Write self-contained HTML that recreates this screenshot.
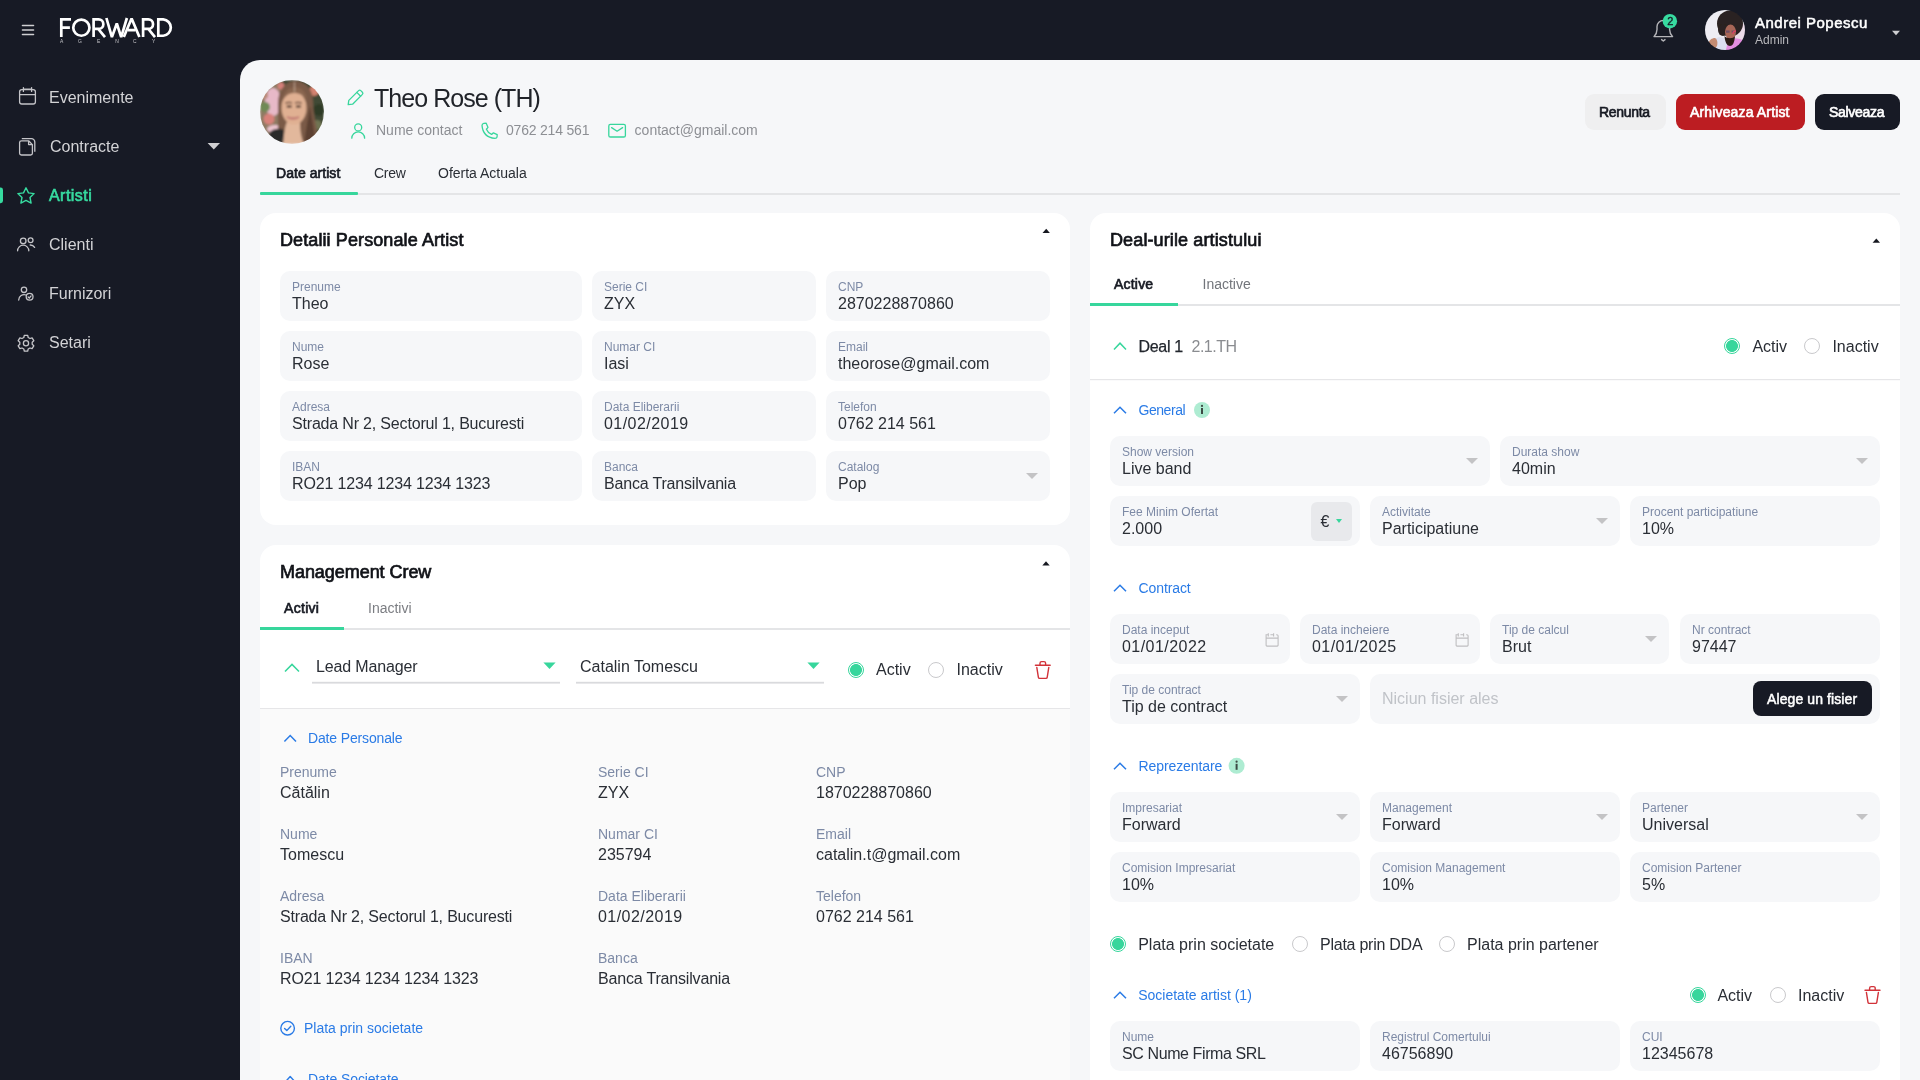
<!DOCTYPE html>
<html><head><meta charset="utf-8">
<style>
*{margin:0;padding:0;box-sizing:border-box}
html,body{-webkit-font-smoothing:antialiased;width:1920px;height:1080px;overflow:hidden;background:#171a25;font-family:"Liberation Sans",sans-serif;color:#2a2e35}
.t{position:absolute;line-height:1;white-space:nowrap}
.b{font-weight:700;letter-spacing:-0.5px}
.side{color:#d3d3d6;font-size:16px}
.ic{position:absolute;overflow:visible}
.main{position:absolute;left:240px;top:60px;width:1680px;height:1020px;background:#f6f7f9;border-top-left-radius:20px;overflow:hidden}
.card{position:absolute;background:#fff;border-radius:16px}
.fld{position:absolute;height:50px;background:#f6f7f9;border-radius:10px}
.fld .l{position:absolute;left:12px;top:10px;font-size:12px;line-height:1;color:#7d8aa6;white-space:nowrap}
.fld .v{position:absolute;left:12px;top:24.5px;font-size:16px;line-height:1;color:#2a2e35;white-space:nowrap}
.fld .cr{position:absolute;right:12px;top:22px;width:0;height:0;border-left:6px solid transparent;border-right:6px solid transparent;border-top:6px solid #c3c3c5}
.lbl{color:#7d8aa6;font-size:14px}
.val{color:#2a2e35;font-size:16px}
.blue{color:#2a7be6}
.rad{position:absolute;width:16px;height:16px;border-radius:50%}
.rad.on{border:1.3px solid #37d69c;background:radial-gradient(circle,#37d69c 0 5.6px,#fff 6.3px)}
.rad.off{border:1.2px solid #c9c9cc;background:#fff}
</style></head><body><div style="position:absolute;left:0;top:0;width:1920px;height:1080px;will-change:transform">

<!-- MAIN BG -->
<div class="main"></div>
<!-- header avatar -->
<svg class="ic" style="left:260px;top:80px" width="64" height="64" viewBox="0 0 64 64">
  <defs>
    <clipPath id="cb"><circle cx="32" cy="32" r="32"/></clipPath>
    <filter id="bl" x="-10%" y="-10%" width="120%" height="120%"><feGaussianBlur stdDeviation="0.9"/></filter>
  </defs>
  <g clip-path="url(#cb)"><g filter="url(#bl)">
    <rect width="64" height="64" fill="#414a34"/>
    <rect x="0" y="0" width="22" height="64" fill="#8f7a64"/>
    <ellipse cx="13" cy="22" rx="8" ry="14" fill="#e7b9c8"/>
    <circle cx="5" cy="27" r="5" fill="#6f8a55"/>
    <circle cx="9" cy="39" r="5.5" fill="#d9817a"/>
    <circle cx="4" cy="15" r="4" fill="#b98a78"/>
    <circle cx="21" cy="6" r="3.5" fill="#d6807a"/>
    <ellipse cx="15" cy="49" rx="8" ry="4" fill="#ecc4cf"/>
    <circle cx="54" cy="11" r="5" fill="#d4826f"/>
    <circle cx="59" cy="30" r="6" fill="#2f3a26"/>
    <circle cx="57" cy="45" r="5" fill="#6f7452"/>
    <path d="M18 64V24C18 9 26 1 35 1C46 1 53 9 53 22C53 40 60 52 56 64Z" fill="#7a5a46"/>
    <path d="M6 64L10 52C14 48 20 48 24 50L26 64Z" fill="#2b2a2c"/>
    <path d="M23 64C24 54 25 46 27 42H40C40 50 41 58 44 64Z" fill="#e2b89c"/>
    <ellipse cx="34" cy="28" rx="12.5" ry="16.5" fill="#e0b092"/>
    <path d="M44 64C46 50 48 38 50 26L56 64Z" fill="#5c4030"/>
    <path d="M22 22C24 10 30 7 35 7C41 7 46 12 47 20C43 14 38 13 34 13C28 13 24 17 22 22Z" fill="#8a6650"/>
    <path d="M27 37Q33 41 39 37Q33 39 27 37Z" fill="#c27a74" stroke="#c27a74" stroke-width="1.6"/>
    <path d="M26.8 26.6H31.6M36 26.6H40.8" stroke="#3a2820" stroke-width="2"/>
    <path d="M25.5 23.2Q29 21.6 32 23M35 23Q38 21.6 41.5 23.2" stroke="#4a3026" stroke-width="1.3" fill="none"/><path d="M34.5 2V12" stroke="#c9b09a" stroke-width="0.8"/>
  </g></g>
</svg>
<svg class="ic" style="left:340px;top:84px" width="300" height="60" viewBox="340 84 300 60">
  <g fill="none" stroke="#37d69c" stroke-width="1.3" stroke-linejoin="round" stroke-linecap="round">
    <path d="M348.2 104.6L348.8 100.4L358.6 90.6A1.6 1.6 0 0 1 360.8 90.6L362.4 92.2A1.6 1.6 0 0 1 362.4 94.4L352.6 104.2Z"/>
    <path d="M356.8 92.4L360.6 96.2"/>
    <circle cx="358.2" cy="127.4" r="3.5"/>
    <path d="M351.8 138.2A6.4 6.4 0 0 1 364.6 138.2"/>
    <path d="M483.8 123.4L486.2 123.2L488 127.4L486.4 129.2C487.4 131.6 489.2 133.4 491.6 134.4L493.4 132.8L497.2 134.6L497 137.2C496.8 138 496 138.4 495 138.4C487.4 137.8 482.6 133 482 125.4C482 124.4 482.8 123.6 483.8 123.4Z"/>
    <rect x="608.8" y="124.4" width="16.6" height="12.6" rx="1.6"/>
    <path d="M611.6 127.6L617.1 131.2L622.6 127.6"/>
  </g>
</svg>
<div class="t" style="left:374px;top:85.5px;font-size:25px;color:#202329;letter-spacing:-0.95px">Theo Rose (TH)</div>
<div class="t" style="left:376px;top:123.4px;font-size:14px;color:#8d8f94">Nume contact</div>
<div class="t" style="left:506px;top:123.4px;font-size:14px;color:#8d8f94;letter-spacing:-0.2px">0762 214 561</div>
<div class="t" style="left:634.6px;top:123.4px;font-size:14px;color:#8d8f94">contact@gmail.com</div>

<!-- buttons -->
<div style="position:absolute;left:1585px;top:94px;width:80.6px;height:35.5px;border-radius:9px;background:#efeff0"></div>
<div class="t" style="left:1599px;top:105px;font-size:14px;color:#161922;letter-spacing:-0.3px;-webkit-text-stroke-width:0.65px">Renunta</div>
<div style="position:absolute;left:1676px;top:94px;width:129px;height:35.5px;border-radius:9px;background:#bc1d22"></div>
<div class="t" style="left:1690px;top:105px;font-size:14px;color:#fff;letter-spacing:0.15px;-webkit-text-stroke-width:0.65px">Arhiveaza Artist</div>
<div style="position:absolute;left:1815px;top:94px;width:85px;height:35.5px;border-radius:9px;background:#171a25"></div>
<div class="t" style="left:1829px;top:105px;font-size:14px;color:#fff;letter-spacing:-0.3px;-webkit-text-stroke-width:0.65px">Salveaza</div>

<!-- tabs -->
<div style="position:absolute;left:260px;top:193px;width:1640px;height:1.5px;background:#e4e5e7"></div>
<div style="position:absolute;left:260px;top:192px;width:98px;height:3px;background:#37d69c;border-radius:1px"></div>
<div class="t" style="left:276px;top:165.6px;font-size:14px;color:#161922;letter-spacing:0.05px;-webkit-text-stroke-width:0.65px">Date artist</div>
<div class="t" style="left:374px;top:165.6px;font-size:14px;color:#2a2e35;letter-spacing:-0.3px">Crew</div>
<div class="t" style="left:438px;top:165.6px;font-size:14px;color:#2a2e35">Oferta Actuala</div>
<!-- CARD 1 -->
<div class="card" style="left:260px;top:213px;width:810px;height:312px"></div>
<div class="t" style="left:280px;top:230.6px;font-size:18px;color:#111318;letter-spacing:0.1px;-webkit-text-stroke:0.7px #111318">Detalii Personale Artist</div>
<svg class="ic" style="left:1040px;top:226px" width="12" height="10"><path d="M2.5 7.1H9.9L6.2 2.8Z" fill="#161820"/></svg>

<div class="fld" style="left:280px;top:271px;width:302px"><div class="l">Prenume</div><div class="v">Theo</div></div>
<div class="fld" style="left:592px;top:271px;width:224px"><div class="l">Serie CI</div><div class="v">ZYX</div></div>
<div class="fld" style="left:826px;top:271px;width:224px"><div class="l">CNP</div><div class="v">2870228870860</div></div>
<div class="fld" style="left:280px;top:331px;width:302px"><div class="l">Nume</div><div class="v">Rose</div></div>
<div class="fld" style="left:592px;top:331px;width:224px"><div class="l">Numar CI</div><div class="v">Iasi</div></div>
<div class="fld" style="left:826px;top:331px;width:224px"><div class="l">Email</div><div class="v">theorose@gmail.com</div></div>
<div class="fld" style="left:280px;top:391px;width:302px"><div class="l">Adresa</div><div class="v" style="letter-spacing:-0.18px">Strada Nr 2, Sectorul 1, Bucuresti</div></div>
<div class="fld" style="left:592px;top:391px;width:224px"><div class="l">Data Eliberarii</div><div class="v" style="letter-spacing:0.45px">01/02/2019</div></div>
<div class="fld" style="left:826px;top:391px;width:224px"><div class="l">Telefon</div><div class="v">0762 214 561</div></div>
<div class="fld" style="left:280px;top:451px;width:302px"><div class="l">IBAN</div><div class="v" style="letter-spacing:-0.15px">RO21 1234 1234 1234 1323</div></div>
<div class="fld" style="left:592px;top:451px;width:224px"><div class="l">Banca</div><div class="v" style="letter-spacing:-0.18px">Banca Transilvania</div></div>
<div class="fld" style="left:826px;top:451px;width:224px"><div class="l">Catalog</div><div class="v">Pop</div><div class="cr"></div></div>

<!-- CARD 2 -->
<div class="card" style="left:260px;top:545px;width:810px;height:600px;overflow:hidden">
  <div style="position:absolute;left:0;top:163px;width:810px;height:1px;background:#e6e6e8"></div>
  <div style="position:absolute;left:0;top:164px;width:810px;height:500px;background:#fafafa"></div>
</div>
<div class="t" style="left:280px;top:562.8px;font-size:18px;color:#111318;letter-spacing:-0.05px;-webkit-text-stroke:0.7px #111318">Management Crew</div>
<svg class="ic" style="left:1040px;top:558px" width="12" height="10"><path d="M2.3 7.6H9.7L6 3.3Z" fill="#161820"/></svg>
<div style="position:absolute;left:260px;top:628px;width:810px;height:1.6px;background:#e4e5e7"></div>
<div style="position:absolute;left:260px;top:627.2px;width:84px;height:3px;background:#37d69c"></div>
<div class="t" style="left:284px;top:600.7px;font-size:14px;color:#161922;letter-spacing:0.3px;-webkit-text-stroke-width:0.65px">Activi</div>
<div class="t" style="left:368px;top:600.7px;font-size:14px;color:#7b7d82">Inactivi</div>

<svg class="ic" style="left:270px;top:650px" width="800" height="110" viewBox="270 650 800 110">
  <path d="M285 671.6L292 664.4L299 671.6" fill="none" stroke="#37d69c" stroke-width="1.5"/>
  <rect x="312" y="681.8" width="248" height="1.8" fill="#d9dadd"/>
  <rect x="576" y="681.8" width="248" height="1.8" fill="#d9dadd"/>
  <path d="M543.4 662.6H555.6L549.5 669Z" fill="#37d69c"/>
  <path d="M807.4 662.6H819.6L813.5 669Z" fill="#37d69c"/>
  <g fill="none" stroke="#d23239" stroke-width="1.4" stroke-linejoin="round" stroke-linecap="round">
    <path d="M1035.4 665.2H1050.2"/>
    <path d="M1040 665V663.2A1.6 1.6 0 0 1 1041.6 661.6H1044A1.6 1.6 0 0 1 1045.6 663.2V665"/>
    <path d="M1036.8 667.4L1038.4 677.4A1.2 1.2 0 0 0 1039.6 678.4H1046A1.2 1.2 0 0 0 1047.2 677.4L1048.8 667.4"/>
  </g>
  <path d="M284.4 741.6L290.2 735.6L296 741.6" fill="none" stroke="#2a7be6" stroke-width="1.5"/>
</svg>
<div class="t" style="left:316px;top:658.9px;font-size:16px;color:#2a2e35;letter-spacing:-0.15px">Lead Manager</div>
<div class="t" style="left:580px;top:658.9px;font-size:16px;color:#2a2e35">Catalin Tomescu</div>
<div class="rad on" style="left:847.6px;top:662px"></div>
<div class="t" style="left:876px;top:662.4px;font-size:16px;color:#2a2e35">Activ</div>
<div class="rad off" style="left:927.8px;top:662px"></div>
<div class="t" style="left:956.5px;top:662.4px;font-size:16px;color:#2a2e35">Inactiv</div>

<div class="t blue" style="left:308px;top:730.7px;font-size:14px;letter-spacing:-0.15px">Date Personale</div>
<div class="t lbl" style="left:280px;top:764.8px">Prenume</div>
<div class="t val" style="left:280px;top:784.5px">Cătălin</div>
<div class="t lbl" style="left:598px;top:764.8px">Serie CI</div>
<div class="t val" style="left:598px;top:784.5px">ZYX</div>
<div class="t lbl" style="left:816px;top:764.8px">CNP</div>
<div class="t val" style="left:816px;top:784.5px">1870228870860</div>
<div class="t lbl" style="left:280px;top:826.8px">Nume</div>
<div class="t val" style="left:280px;top:846.5px">Tomescu</div>
<div class="t lbl" style="left:598px;top:826.8px">Numar CI</div>
<div class="t val" style="left:598px;top:846.5px">235794</div>
<div class="t lbl" style="left:816px;top:826.8px">Email</div>
<div class="t val" style="left:816px;top:846.5px">catalin.t@gmail.com</div>
<div class="t lbl" style="left:280px;top:888.8px">Adresa</div>
<div class="t val" style="left:280px;top:908.5px;letter-spacing:-0.18px">Strada Nr 2, Sectorul 1, Bucuresti</div>
<div class="t lbl" style="left:598px;top:888.8px">Data Eliberarii</div>
<div class="t val" style="left:598px;top:908.5px;letter-spacing:0.45px">01/02/2019</div>
<div class="t lbl" style="left:816px;top:888.8px">Telefon</div>
<div class="t val" style="left:816px;top:908.5px">0762 214 561</div>
<div class="t lbl" style="left:280px;top:950.8px">IBAN</div>
<div class="t val" style="left:280px;top:970.5px;letter-spacing:-0.15px">RO21 1234 1234 1234 1323</div>
<div class="t lbl" style="left:598px;top:950.8px">Banca</div>
<div class="t val" style="left:598px;top:970.5px;letter-spacing:-0.18px">Banca Transilvania</div>
<svg class="ic" style="left:270px;top:1010px" width="60" height="70" viewBox="270 1010 60 70">
  <g fill="none" stroke="#2a7be6" stroke-width="1.4" stroke-linecap="round" stroke-linejoin="round">
    <circle cx="287.6" cy="1028.2" r="6.8"/>
    <path d="M284.6 1028.4L286.8 1030.6L290.8 1026.2"/>
    <path d="M284.8 1082.4L290.2 1076.6L295.6 1082.4"/>
  </g>
</svg>
<div class="t blue" style="left:304px;top:1021.2px;font-size:14px">Plata prin societate</div>
<div class="t blue" style="left:308px;top:1071.8px;font-size:14px;letter-spacing:-0.1px">Date Societate</div>
<!-- RIGHT CARD -->
<div class="card" style="left:1090px;top:213px;width:810px;height:900px"></div>
<div class="t" style="left:1110px;top:230.6px;font-size:18px;color:#111318;letter-spacing:0.12px;-webkit-text-stroke:0.7px #111318">Deal-urile artistului</div>
<svg class="ic" style="left:1870px;top:234px" width="12" height="10"><path d="M2.6 8.8H10L6.3 4.5Z" fill="#161820"/></svg>
<div style="position:absolute;left:1090px;top:304.4px;width:810px;height:1.6px;background:#e4e5e7"></div>
<div style="position:absolute;left:1090px;top:303.3px;width:88px;height:3px;background:#37d69c"></div>
<div class="t" style="left:1114px;top:276.7px;font-size:14px;color:#161922;letter-spacing:0.2px;-webkit-text-stroke-width:0.65px">Active</div>
<div class="t" style="left:1202.5px;top:276.7px;font-size:14px;color:#72757b">Inactive</div>

<svg class="ic" style="left:1090px;top:330px" width="830" height="750" viewBox="1090 330 830 750">
  <path d="M1114 349.4L1120 343.2L1126 349.4" fill="none" stroke="#37d69c" stroke-width="1.5"/>
  <rect x="1090" y="379" width="810" height="1.2" fill="#e6e6e8"/>
  <g fill="none" stroke="#2a7be6" stroke-width="1.5">
    <path d="M1114 413.2L1120 407.2L1126 413.2"/>
    <path d="M1114 591.2L1120 585.2L1126 591.2"/>
    <path d="M1114 769.2L1120 763.2L1126 769.2"/>
    <path d="M1114 998.2L1120 992.2L1126 998.2"/>
  </g>
  <circle cx="1202" cy="410" r="8" fill="#aeecd2"/>
  <circle cx="1236.6" cy="765.8" r="8" fill="#aeecd2"/>
  <g fill="#3c4a44"><rect x="1201" y="408" width="2" height="6"/><circle cx="1202" cy="405.9" r="1.1"/>
  <rect x="1235.6" y="763.8" width="2" height="6"/><circle cx="1236.6" cy="761.7" r="1.1"/></g>
  <g fill="none" stroke="#d23239" stroke-width="1.4" stroke-linejoin="round" stroke-linecap="round">
    <path d="M1865 990.2H1880"/>
    <path d="M1869.6 990V988.2A1.6 1.6 0 0 1 1871.2 986.6H1873.6A1.6 1.6 0 0 1 1875.2 988.2V990"/>
    <path d="M1866.4 992.4L1868 1002.4A1.2 1.2 0 0 0 1869.2 1003.4H1875.6A1.2 1.2 0 0 0 1876.8 1002.4L1878.4 992.4"/>
  </g>
</svg>
<div class="t" style="left:1138.5px;top:339.4px;font-size:16px;color:#22262d;letter-spacing:-0.3px;-webkit-text-stroke:0.25px #22262d">Deal 1</div>
<div class="t" style="left:1191.5px;top:339.4px;font-size:16px;color:#8a8c90;letter-spacing:-0.5px">2.1.TH</div>
<div class="rad on" style="left:1723.8px;top:338px"></div>
<div class="t" style="left:1752.4px;top:338.8px;font-size:16px;color:#2a2e35">Activ</div>
<div class="rad off" style="left:1803.9px;top:338px"></div>
<div class="t" style="left:1832.4px;top:338.8px;font-size:16px;color:#2a2e35">Inactiv</div>

<div class="t blue" style="left:1138.5px;top:402.8px;font-size:14px;letter-spacing:-0.45px">General</div>
<div class="fld" style="left:1110px;top:436px;width:380px"><div class="l">Show version</div><div class="v">Live band</div><div class="cr"></div></div>
<div class="fld" style="left:1500px;top:436px;width:380px"><div class="l">Durata show</div><div class="v">40min</div><div class="cr"></div></div>
<div class="fld" style="left:1110px;top:496px;width:250px"><div class="l">Fee Minim Ofertat</div><div class="v">2.000</div>
  <div style="position:absolute;left:200.5px;top:6px;width:41.2px;height:38.6px;border-radius:6px;background:#e8e9ec"></div>
  <div style="position:absolute;left:210.6px;top:17.5px;font-size:16px;line-height:1;color:#2a2e35">€</div>
  <div style="position:absolute;left:226px;top:23px;width:0;height:0;border-left:3.3px solid transparent;border-right:3.3px solid transparent;border-top:4px solid #37d69c"></div>
</div>
<div class="fld" style="left:1370px;top:496px;width:250px"><div class="l">Activitate</div><div class="v">Participatiune</div><div class="cr"></div></div>
<div class="fld" style="left:1630px;top:496px;width:250px"><div class="l">Procent participatiune</div><div class="v">10%</div></div>

<div class="t blue" style="left:1138.5px;top:580.8px;font-size:14px;letter-spacing:-0.1px">Contract</div>
<div class="fld" style="left:1110px;top:614px;width:180px"><div class="l">Data inceput</div><div class="v" style="letter-spacing:0.45px">01/01/2022</div>
  <svg style="position:absolute;left:154.5px;top:18.5px" width="15" height="14" viewBox="0 0 15 14"><g fill="none" stroke="#bfbfc1" stroke-width="1.1"><path d="M3 1.8H1.1V12.3A1.2 1.2 0 0 0 2.3 13.1H11.9A1.2 1.2 0 0 0 13.1 12.3V2.9A1.2 1.2 0 0 0 11.9 1.8H11.2M1.1 5.1H13.1M3.3 0.3V3.4M8.6 0.3V3.4M5.4 1.8H8.6"/></g></svg></div>
<div class="fld" style="left:1300px;top:614px;width:180px"><div class="l">Data incheiere</div><div class="v" style="letter-spacing:0.45px">01/01/2025</div>
  <svg style="position:absolute;left:154.5px;top:18.5px" width="15" height="14" viewBox="0 0 15 14"><g fill="none" stroke="#bfbfc1" stroke-width="1.1"><path d="M3 1.8H1.1V12.3A1.2 1.2 0 0 0 2.3 13.1H11.9A1.2 1.2 0 0 0 13.1 12.3V2.9A1.2 1.2 0 0 0 11.9 1.8H11.2M1.1 5.1H13.1M3.3 0.3V3.4M8.6 0.3V3.4M5.4 1.8H8.6"/></g></svg></div>
<div class="fld" style="left:1490px;top:614px;width:179px"><div class="l">Tip de calcul</div><div class="v">Brut</div><div class="cr"></div></div>
<div class="fld" style="left:1680px;top:614px;width:200px"><div class="l">Nr contract</div><div class="v">97447</div></div>
<div class="fld" style="left:1110px;top:674px;width:250px"><div class="l">Tip de contract</div><div class="v">Tip de contract</div><div class="cr"></div></div>
<div class="fld" style="left:1370px;top:674px;width:510px">
  <div style="position:absolute;left:12px;top:16.8px;font-size:16px;line-height:1;color:#c0c3c8;white-space:nowrap">Niciun fisier ales</div>
  <div style="position:absolute;left:383px;top:6.8px;width:119px;height:35.4px;border-radius:8px;background:#171a25"></div>
  <div style="position:absolute;left:397px;top:17.5px;font-size:14px;line-height:1;color:#fff;letter-spacing:0.1px;-webkit-text-stroke-width:0.5px;white-space:nowrap">Alege un fisier</div>
</div>

<div class="t blue" style="left:1138.5px;top:758.8px;font-size:14px;letter-spacing:-0.1px">Reprezentare</div>
<div class="fld" style="left:1110px;top:792px;width:250px"><div class="l">Impresariat</div><div class="v">Forward</div><div class="cr"></div></div>
<div class="fld" style="left:1370px;top:792px;width:250px"><div class="l">Management</div><div class="v">Forward</div><div class="cr"></div></div>
<div class="fld" style="left:1630px;top:792px;width:250px"><div class="l">Partener</div><div class="v">Universal</div><div class="cr"></div></div>
<div class="fld" style="left:1110px;top:852px;width:250px"><div class="l">Comision Impresariat</div><div class="v">10%</div></div>
<div class="fld" style="left:1370px;top:852px;width:250px"><div class="l">Comision Management</div><div class="v">10%</div></div>
<div class="fld" style="left:1630px;top:852px;width:250px"><div class="l">Comision Partener</div><div class="v">5%</div></div>

<div class="rad on" style="left:1110px;top:935.8px"></div>
<div class="t" style="left:1138.2px;top:936.8px;font-size:16px;color:#2a2e35">Plata prin societate</div>
<div class="rad off" style="left:1292px;top:935.8px"></div>
<div class="t" style="left:1320px;top:936.8px;font-size:16px;color:#2a2e35;letter-spacing:-0.25px">Plata prin DDA</div>
<div class="rad off" style="left:1439px;top:935.8px"></div>
<div class="t" style="left:1467px;top:936.8px;font-size:16px;color:#2a2e35">Plata prin partener</div>

<div class="t blue" style="left:1138.2px;top:987.8px;font-size:14px">Societate artist (1)</div>
<div class="rad on" style="left:1689.8px;top:986.7px"></div>
<div class="t" style="left:1717.4px;top:987.9px;font-size:16px;color:#2a2e35">Activ</div>
<div class="rad off" style="left:1769.8px;top:986.7px"></div>
<div class="t" style="left:1798px;top:987.9px;font-size:16px;color:#2a2e35">Inactiv</div>
<div class="fld" style="left:1110px;top:1021px;width:250px"><div class="l">Nume</div><div class="v" style="letter-spacing:-0.4px">SC Nume Firma SRL</div></div>
<div class="fld" style="left:1370px;top:1021px;width:250px"><div class="l">Registrul Comertului</div><div class="v">46756890</div></div>
<div class="fld" style="left:1630px;top:1021px;width:250px"><div class="l">CUI</div><div class="v">12345678</div></div>
<!-- TOP BAR + SIDEBAR -->
<svg class="ic" style="left:0;top:0" width="240" height="400" viewBox="0 0 240 400">
  <g stroke="#cfcfd2" stroke-width="1.6" stroke-linecap="round"><path d="M22.5 25.5H33.5M22.5 30H33.5M22.5 34.5H33.5"/></g>
  <g fill="none" stroke="#fff" stroke-width="2.7" stroke-miterlimit="3">
    <path d="M61.3 37.1V19.4H71M61.3 27.7H69.9"/>
    <circle cx="81.35" cy="27.65" r="8.1"/>
    <path d="M93.6 37.1V19.4H98.6A4.75 4.75 0 0 1 98.6 28.9H93.6M98.2 28.9L105 37.1"/>
    <path stroke-linejoin="bevel" d="M106.4 18L111.9 37.1L116.8 23.5L121.2 37.1L126.9 18"/>
    <path stroke-linejoin="bevel" d="M123.8 37.1L131.6 18.6L139.4 37.1M128 30.2H135.2"/>
    <path d="M143.1 37.1V19.4H148.3A4.75 4.75 0 0 1 148.3 28.9H143.1M148.3 28.9L155 37.1"/>
    <path d="M158.3 19.4H163.25A8.2 8.2 0 0 1 163.25 35.75H158.3Z"/>
  </g>
  <g fill="#c4c4c8" font-family="Liberation Sans" font-weight="400" font-size="4.9">
    <text x="59.9" y="43.4">A</text><text x="78" y="43.4">G</text><text x="96.9" y="43.4">E</text><text x="115.2" y="43.4">N</text><text x="133.1" y="43.4">C</text><text x="152" y="43.4">Y</text>
  </g>
  <!-- calendar -->
  <g fill="none" stroke="#c4c4c8" stroke-width="1.3" stroke-linecap="round">
    <rect x="19.6" y="89.6" width="15.8" height="14.4" rx="2.2"/>
    <path d="M19.6 94.6H35.4M23.4 87.6V91.4M31.6 87.6V91.4M23.4 89.2H31.6"/>
  </g>
  <!-- contracte docs -->
  <g fill="none" stroke="#c4c4c8" stroke-width="1.3" stroke-linejoin="round">
    <path d="M21.8 138.6H31.4A3.4 3.4 0 0 1 34.8 142V151.8"/>
    <path d="M19.6 142.6A1.8 1.8 0 0 1 21.4 140.8H28.6L32.4 144.6V153.2A1.8 1.8 0 0 1 30.6 155H21.4A1.8 1.8 0 0 1 19.6 153.2Z"/>
    <path d="M28.6 141V144.6H32.2"/>
  </g>
  <!-- side menu text placeholders below -->
  <!-- active bar -->
  <rect x="-3" y="187.6" width="6" height="15.6" rx="2.4" fill="#37dba0"/>
  <!-- star -->
  <path d="M26 187.8L28.5 192.9L34.1 193.6L30 197.5L31.1 203.1L26 200.4L20.9 203.1L22 197.5L17.9 193.6L23.5 192.9Z" fill="none" stroke="#37dba0" stroke-width="1.4" stroke-linejoin="round"/>
  <!-- clients -->
  <g fill="none" stroke="#c4c4c8" stroke-width="1.3" stroke-linecap="round">
    <circle cx="23.2" cy="240.9" r="2.8"/>
    <path d="M17.6 250.8A5.6 5.6 0 0 1 28.8 250.8"/>
    <circle cx="30.6" cy="240.2" r="2.4"/>
    <path d="M30.2 245A5 5 0 0 1 34.6 247.4"/>
  </g>
  <!-- furnizori -->
  <g fill="none" stroke="#c4c4c8" stroke-width="1.3" stroke-linecap="round">
    <circle cx="24" cy="289.8" r="2.7"/>
    <path d="M18.7 300A5.4 5.4 0 0 1 26.2 295"/>
    <circle cx="29.6" cy="296.8" r="3.4"/>
    <path d="M28.1 296.9L29.3 298L31.1 295.9"/>
  </g>
  <!-- gear -->
  <g fill="none" stroke="#c4c4c8" stroke-width="1.3" stroke-linejoin="round">
    <path d="M24.3 335.3H27.7L28.2 337.5L30 338.5L32.1 337.8L33.8 340.7L32.2 342.3V344.3L33.8 345.8L32.1 348.7L30 348L28.2 349L27.7 351.2H24.3L23.8 349L22 348L19.9 348.7L18.2 345.8L19.8 344.3V342.3L18.2 340.7L19.9 337.8L22 338.5L23.8 337.5Z"/>
    <circle cx="26" cy="343.3" r="2.6"/>
  </g>
  <!-- contracte triangle -->
  <path d="M207.6 143H220L213.8 149.6Z" fill="#d0d0d3"/>
</svg>
<div class="t side" style="left:49px;top:89.9px">Evenimente</div>
<div class="t side" style="left:50px;top:138.9px">Contracte</div>
<div class="t side" style="left:49px;top:187.9px;color:#37dba0;letter-spacing:0.45px;-webkit-text-stroke-width:0.65px">Artisti</div>
<div class="t side" style="left:49px;top:236.9px">Clienti</div>
<div class="t side" style="left:49px;top:285.9px">Furnizori</div>
<div class="t side" style="left:49px;top:334.9px">Setari</div>

<!-- top right -->
<svg class="ic" style="left:1640px;top:0" width="280" height="60" viewBox="1640 0 280 60">
  <g fill="none" stroke="#b4b4b8" stroke-width="1.4" stroke-linejoin="round" stroke-linecap="round">
    <path d="M1654 36.6H1672.6C1670.6 34.4 1669.6 32.6 1669.6 29.4V26.6A6.3 6.3 0 0 0 1657 26.6V29.4C1657 32.6 1656 34.4 1654 36.6Z"/>
    <path d="M1661.6 39.6L1663.3 41L1665 39.6"/>
  </g>
  <circle cx="1669.9" cy="21.2" r="7.2" fill="#37dba0"/>
  <text x="1670.2" y="25.1" text-anchor="middle" font-family="Liberation Sans" font-weight="400" font-size="11" fill="#171a25" stroke="#171a25" stroke-width="0.3">2</text>
  <path d="M1892 30.8H1900L1896 35.2Z" fill="#cfcfd2"/>
</svg>
<svg class="ic" style="left:1705px;top:10px" width="40" height="40" viewBox="0 0 40 40">
  <defs>
    <clipPath id="ca"><circle cx="20" cy="20" r="20"/></clipPath>
    <filter id="bl2" x="-10%" y="-10%" width="120%" height="120%"><feGaussianBlur stdDeviation="0.7"/></filter>
  </defs>
  <g clip-path="url(#ca)"><g filter="url(#bl2)">
    <rect width="40" height="40" fill="#eeedf3"/>
    <rect x="30" y="14" width="12" height="26" fill="#ecdce9"/>
    <path d="M5 40L7 30L14 27L24 29L24 40Z" fill="#dcdff0"/>
    <path d="M21 40L23 30C28 27 34 28 40 31V40Z" fill="#e48fe0"/>
    <ellipse cx="25" cy="13.5" rx="13" ry="13" fill="#2a2120"/>
    <ellipse cx="18" cy="20" rx="5" ry="6" fill="#2a2120"/>
    <ellipse cx="25.5" cy="22" rx="5.5" ry="7.5" fill="#a86656"/>
    <path d="M19.5 26C20 33 22.5 36 25 36C27.5 36 29.5 33 30 26C28 29 22 29 19.5 26Z" fill="#2b1c19"/>
    <path d="M21 21.6H24.6M26.6 21.6H30.4" stroke="#6f4f66" stroke-width="2.2"/>
    <path d="M28 24A3 3 0 0 1 31 21" stroke="#d54660" stroke-width="1.6" fill="none"/>
    <path d="M3 34C4 30 7 28 10 28C12 29 13 32 12 36L9 40H4Z" fill="#c38b72"/>
  </g></g>
</svg>
<div class="t" style="left:1755px;top:15px;font-size:15px;color:#fff;letter-spacing:0.5px;-webkit-text-stroke-width:0.5px">Andrei Popescu</div>
<div class="t" style="left:1755px;top:33.6px;font-size:12px;color:#b8b8bc">Admin</div>

</div></body></html>
